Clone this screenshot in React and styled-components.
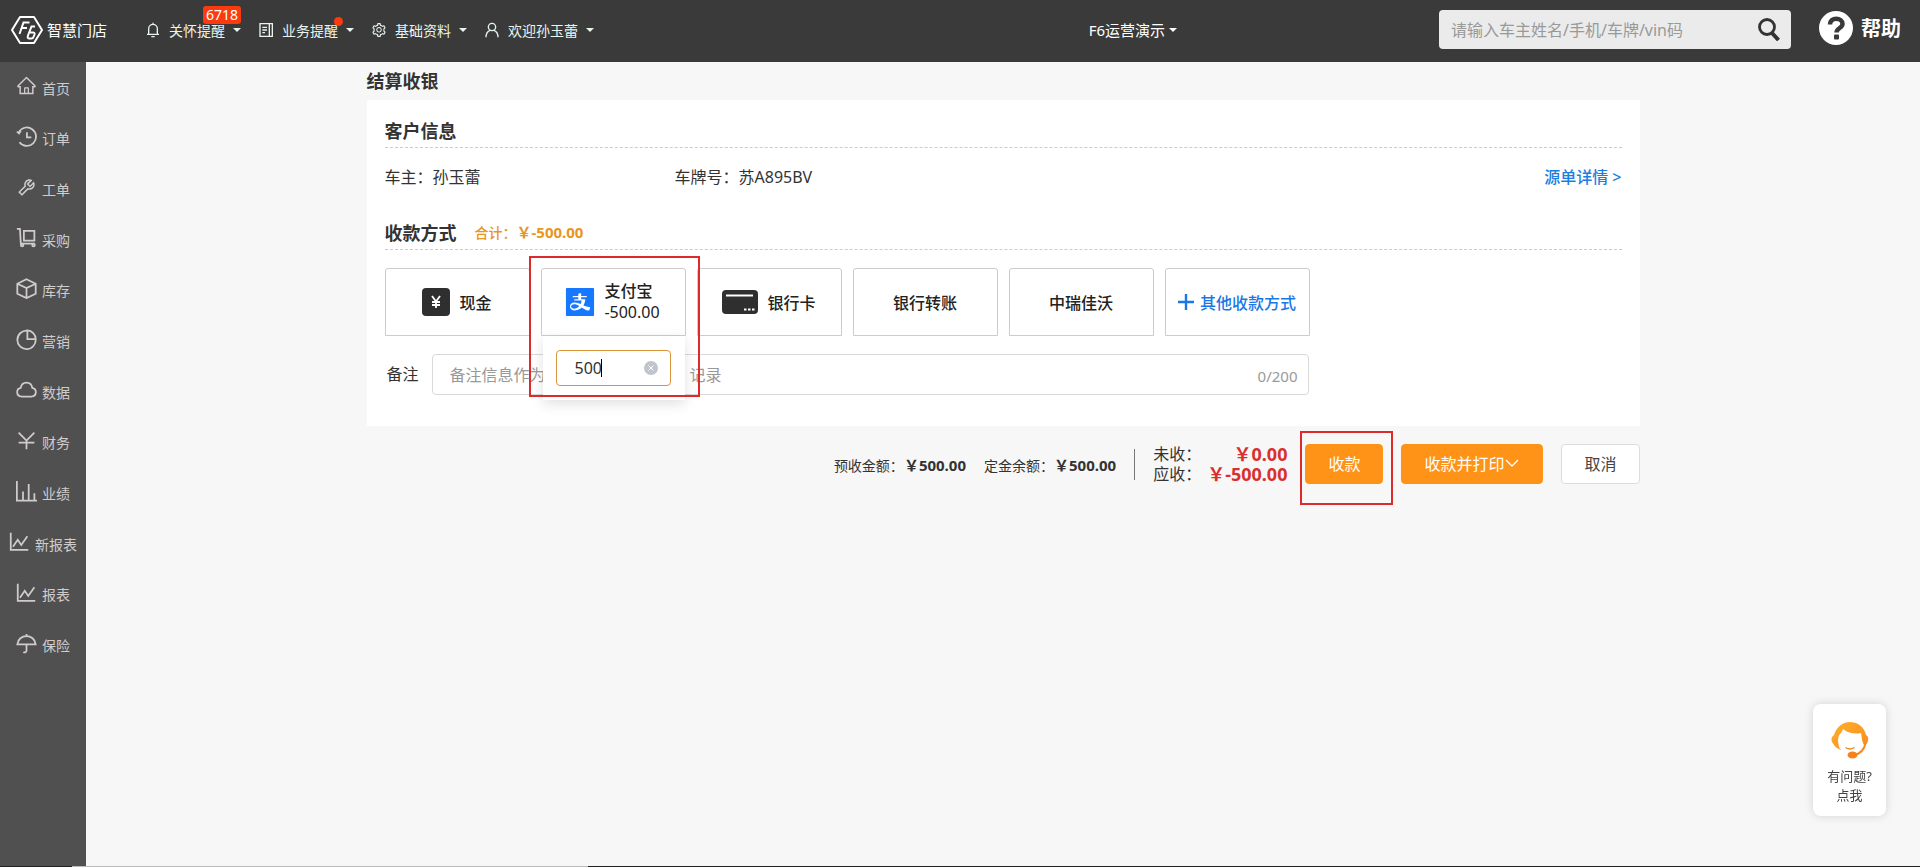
import React, { useState } from 'react'
import styled, { createGlobalStyle } from 'styled-components'
import { AiOutlineHome, AiOutlineSetting, AiOutlineTool, AiFillAlipaySquare } from 'react-icons/ai'

const line = {
  viewBox: '0 0 24 24',
  fill: 'none',
  stroke: 'currentColor',
  strokeWidth: 2,
}

const OrderIcon = () => (
  <svg {...line}>
    <path d="M3 7.500A10.500 10.500 0 1 1 4 18.500M12.500 7v6h5" />
    <path d="M1 6.500l2.500 2 2-3" />
  </svg>
)

const CartIcon = () => (
  <svg {...line}>
    <path d="M1 2h3.500l1 17H21M9 4.500h12v11H9z" />
    <circle cx="7" cy="20.500" r="1.500" />
    <circle cx="20" cy="20.500" r="1.500" />
  </svg>
)

const BoxIcon = () => (
  <svg {...line}>
    <path d="M12 1.500l10.500 5v11.500l-10.500 5-10.500-5v-11.500zM1.500 6.500l10.500 5 10.500-5M12 11.500v11" />
  </svg>
)

const PieIcon = () => (
  <svg {...line}>
    <path d="M13 2a10.500 10.500 0 1 0 9.500 9.500M13 1.500v10h9.500A10 10 0 0 0 13 1.500z" />
  </svg>
)

const CloudIcon = () => (
  <svg {...line}>
    <path d="M6 20a5 5 0 0 1-.6-9.900C6 6 9 4 12 4s6 2 6.600 6.100A5 5 0 0 1 18 20z" />
  </svg>
)

const YuanIcon = () => (
  <svg {...line}>
    <path d="M3 3l9 9 9-9M12 12v10M3 14.500h18" />
  </svg>
)

const BarsIcon = () => (
  <svg {...line}>
    <path d="M1 0v22.500H24M8 22V12M14.500 22V3.500M21 22v-8" />
  </svg>
)

const TrendIcon = () => (
  <svg {...line}>
    <path d="M2 2v19.500h20M4.500 18l5.500-8 4 6L21 6" />
  </svg>
)

const UmbrellaIcon = () => (
  <svg {...line}>
    <path d="M12 1v2.500M1.500 13C2 7 7 3.500 12 3.500S22 7 22.500 13zM12 13v7.500a2 2 0 0 1-3.500 1" />
  </svg>
)

const BellIcon = () => (
  <svg {...line}>
    <path d="M5.500 18V10a6.500 6.500 0 0 1 13 0v8M3 18.500h18M12 4V1M9.500 22h5" />
  </svg>
)

const DocIcon = () => (
  <svg {...line}>
    <path d="M3 2.500h14v19H3zM17 2.500h4.500v19H17M6.500 8h7M6.500 12h7M6.500 16h4" />
  </svg>
)

const UserIcon = () => (
  <svg {...line}>
    <circle cx="12" cy="7.500" r="5.500" />
    <path d="M3 23c0-6 3-9.500 6.500-10.500M21 23c0-6-3-9.500-6.500-10.500" />
  </svg>
)

const BrandIcon = () => (
  <svg width="32" height="30" viewBox="0 0 32 30" fill="none" stroke="#fff">
    <path d="M9 2h14l8 13-8 13H9L1 15z" strokeWidth="2" strokeLinejoin="round" />
    <path d="M8.500 19l4-11.500h6M11 13h5" strokeWidth="2" />
    <path d="M24 11.500h-3.500l-3.500 9q-1 3 1 3h2.500q1.500 0 2-1.500l1-2.500q.5-2-1.500-2h-3" strokeWidth="2" />
  </svg>
)

const SearchIcon = () => (
  <svg width="22" height="23" viewBox="0 0 22 23" fill="none" stroke="#333">
    <circle cx="9" cy="9" r="7.500" strokeWidth="2.800" />
    <path d="M14 15l6.500 7" strokeWidth="4" />
  </svg>
)

const HelpIcon = () => (
  <svg width="34" height="34" viewBox="0 0 34 34" fill="none">
    <circle cx="17" cy="17" r="17" fill="#fff" />
    <path d="M11 13.500c0-8 12.500-7.500 12.500-.5 0 4-6 4-6 8.500" stroke="#3a3a3a" strokeWidth="4.500" />
    <rect x="15" y="23.500" width="5" height="5" rx="1" fill="#3a3a3a" />
  </svg>
)

const CashIcon = () => (
  <svg width="28" height="28" viewBox="0 0 28 28" fill="none">
    <rect width="28" height="28" rx="4" fill="#2f2f2f" />
    <path d="M10 8l4 5.500L18 8M14 13.500V20M10 14h8M10 17h8" stroke="#fff" strokeWidth="1.800" />
  </svg>
)

const CardIcon = () => (
  <svg width="36" height="24" viewBox="0 0 36 24">
    <rect width="36" height="24" rx="4" fill="#2f2f2f" />
    <path d="M4 5.500h27" stroke="#fff" strokeWidth="2" />
    <path d="M22 19.500h2.500M26 19.500h2.500M30 19.500h2.500" stroke="#fff" strokeWidth="2" />
  </svg>
)

const PlusIcon = () => (
  <svg width="16" height="16" viewBox="0 0 16 16" stroke="currentColor" strokeWidth="2.400">
    <path d="M8 0v16M0 8h16" />
  </svg>
)

const ClearIcon = () => (
  <svg width="14" height="14" viewBox="0 0 14 14">
    <circle cx="7" cy="7" r="7" fill="#c0c4cc" />
    <path d="M4.500 4.500l5 5M9.500 4.500l-5 5" stroke="#fff" />
  </svg>
)

const ServiceIcon = () => (
  <svg width="38" height="38" viewBox="0 0 38 38" fill="none">
    <defs>
      <linearGradient id="hair" x1="0" y1="0" x2="1" y2="1">
        <stop offset="0" stopColor="#ffb02e" />
        <stop offset="1" stopColor="#f78a1d" />
      </linearGradient>
    </defs>
    <path
      d="M3 14C6 5 12 1 19 1s14 4 16 13c2 1 2.500 3 2 5.500-.4 2.500-1.500 4-3.500 4.500-2-1-2.500-6-3.500-12-5 1-12 1-18-4-1 4-4 5-4.500 8-1 4 0 8 1 11l2 2C7 28 3 25 2.500 23 0 21-.5 16 3 14z"
      fill="url(#hair)"
    />
    <path d="M34.500 22c-1 6-5 11-12 12" stroke="#f78a1d" strokeWidth="2" />
    <ellipse cx="21.500" cy="34" rx="5" ry="3.500" fill="#f5821f" />
    <path d="M14.500 26.500q4.500 3 9 0" stroke="#f78a1d" strokeWidth="1.500" />
  </svg>
)

const menus = [
  { icon: <BellIcon />, text: '关怀提醒', badge: '6718' },
  { icon: <DocIcon />, text: '业务提醒', dot: true },
  { icon: <AiOutlineSetting />, text: '基础资料' },
  { icon: <UserIcon />, text: '欢迎孙玉蕾' },
]

const sideItems = [
  { icon: <AiOutlineHome />, text: '首页' },
  { icon: <OrderIcon />, text: '订单' },
  { icon: <AiOutlineTool />, text: '工单' },
  { icon: <CartIcon />, text: '采购' },
  { icon: <BoxIcon />, text: '库存' },
  { icon: <PieIcon />, text: '营销' },
  { icon: <CloudIcon />, text: '数据' },
  { icon: <YuanIcon />, text: '财务' },
  { icon: <BarsIcon />, text: '业绩' },
  { icon: <TrendIcon />, text: '新报表' },
  { icon: <TrendIcon />, text: '报表' },
  { icon: <UmbrellaIcon />, text: '保险' },
]

function TopBar() {
  return (
    <Header>
      <Brand href="#">
        <BrandIcon />
        智慧门店
      </Brand>
      <Menus>
        {menus.map(({ icon, text, badge, dot }) => (
          <MenuButton key={text}>
            {icon}
            <MenuText>
              {text}
              {badge && <Badge>{badge}</Badge>}
              {dot && <Dot />}
            </MenuText>
            <Caret />
          </MenuButton>
        ))}
      </Menus>
      <StoreButton>
        F6运营演示
        <Caret />
      </StoreButton>
      <Search>
        <input aria-label="搜索" placeholder="请输入车主姓名/手机/车牌/vin码" />
        <button aria-label="查询">
          <SearchIcon />
        </button>
      </Search>
      <Help href="#">
        <HelpIcon />
        帮助
      </Help>
    </Header>
  )
}

function SideBar() {
  return (
    <Side>
      <SideList>
        {sideItems.map(({ icon, text }) => (
          <li key={text}>
            <SideLink href="#">
              {icon}
              <span>{text}</span>
            </SideLink>
          </li>
        ))}
      </SideList>
    </Side>
  )
}

function App() {
  const [amount, setAmount] = useState('500')
  const [remark, setRemark] = useState('')

  return (
    <>
      <GlobalStyle />
      <Page>
        <TopBar />
        <Body>
          <SideBar />
          <Main>
            <Content>
              <PageTitle>结算收银</PageTitle>
              <Panel>
                <SectionHead>
                  <h2>客户信息</h2>
                </SectionHead>
                <InfoRow>
                  <span>车主：孙玉蕾</span>
                  <span>车牌号：苏A895BV</span>
                  <a href="#">源单详情 &gt;</a>
                </InfoRow>
                <SectionHead>
                  <h2>收款方式</h2>
                  <Total>
                    合计：<b>￥-500.00</b>
                  </Total>
                </SectionHead>
                <Methods>
                  <Method>
                    <CashIcon />
                    现金
                  </Method>
                  <MethodCell>
                    <Method>
                      <AlipayIcon />
                      <MethodText>
                        支付宝
                        <small>-500.00</small>
                      </MethodText>
                    </Method>
                    <Popover>
                      <AmountBox>
                        <input
                          aria-label="支付宝金额"
                          value={amount}
                          onChange={(e) => setAmount(e.target.value)}
                        />
                        <Cursor />
                        <button aria-label="清空" onClick={() => setAmount('')}>
                          <ClearIcon />
                        </button>
                      </AmountBox>
                    </Popover>
                    <Highlight $top={-12} $right={-14} $bottom={-61} $left={-12} />
                  </MethodCell>
                  <Method>
                    <CardIcon />
                    银行卡
                  </Method>
                  <Method>银行转账</Method>
                  <Method>中瑞佳沃</Method>
                  <Method $link>
                    <PlusIcon />
                    其他收款方式
                  </Method>
                </Methods>
                <Remark>
                  <label htmlFor="remark">备注</label>
                  <RemarkBox>
                    <input
                      id="remark"
                      maxLength={200}
                      placeholder="备注信息作为收款凭证的一部分，记录"
                      value={remark}
                      onChange={(e) => setRemark(e.target.value)}
                    />
                    <span>{remark.length}/200</span>
                  </RemarkBox>
                </Remark>
              </Panel>
              <Actions>
                <Balance>
                  预收金额：<b>￥500.00</b>
                </Balance>
                <Balance>
                  定金余额：<b>￥500.00</b>
                </Balance>
                <Divider />
                <Due>
                  <dt>未收：</dt>
                  <dd>￥0.00</dd>
                  <dt>应收：</dt>
                  <dd>￥-500.00</dd>
                </Due>
                <ButtonCell>
                  <Button $primary>收款</Button>
                  <Highlight $top={-13} $right={-10} $bottom={-21} $left={-5} />
                </ButtonCell>
                <Button $primary>
                  收款并打印
                  <svg width="16" height="8" viewBox="0 0 16 8" fill="none" stroke="#fff" strokeWidth="1.300">
                    <path d="M2 1l6 6 6-6" />
                  </svg>
                </Button>
                <Button>取消</Button>
              </Actions>
            </Content>
          </Main>
        </Body>
        <BottomEdge />
      </Page>
      <Service href="#">
        <ServiceIcon />
        <span>有问题?</span>
        <span>点我</span>
      </Service>
    </>
  )
}

const GlobalStyle = createGlobalStyle`
*{
    box-sizing: border-box;
}
body{
    margin: 0;
    background: #f7f7f7;
    color: #333;
}
body, button, input{
    font-family: "Noto Sans", "Noto Sans CJK SC", sans-serif;
}
button{
    padding: 0;
    border: 0;
    background: none;
    color: inherit;
    cursor: pointer;
}
a{
    text-decoration: none;
}
svg{
    flex: none;
    display: block;
}
`

const Page = styled.div`
display: flex;
flex-direction: column;
min-height: 100vh;
`

const Header = styled.header`
display: flex;
align-items: center;
height: 62px;
padding: 0 19px 3px 11px;
background: #3a3a3a;
color: #fff;
font-size: 14px;
`

const Brand = styled.a`
display: flex;
align-items: center;
gap: 4px;
color: #fff;
font-size: 15px;
`

const Menus = styled.nav`
display: flex;
flex: 1;
gap: 17px;
margin-left: 38px;
`

const MenuButton = styled.button`
display: flex;
align-items: center;
gap: 8px;
font-size: 14px;
color: #e8f5ec;
> svg{
    width: 16px;
    height: 16px;
}
`

const MenuText = styled.span`
position: relative;
`

const Badge = styled.span`
position: absolute;
left: 34px;
bottom: 16px;
padding: 0 3px;
border-radius: 3px;
background: #fb3a0e;
color: #fff;
line-height: 18px;
`

const Dot = styled.span`
position: absolute;
top: -3px;
right: -5px;
width: 9px;
height: 9px;
border-radius: 50%;
background: #fb3a0e;
`

const Caret = styled.i`
border: 4px solid transparent;
border-top-color: currentColor;
border-bottom: 0;
`

const StoreButton = styled.button`
display: flex;
align-items: center;
gap: 4px;
margin-right: 262px;
font-size: 15px;
`

const Search = styled.div`
display: flex;
align-items: center;
width: 352px;
height: 39px;
padding: 0 11px 0 12px;
border-radius: 4px;
background: #ebebeb;
input{
    flex: 1;
    min-width: 0;
    border: 0;
    padding: 0;
    outline: 0;
    background: none;
    font-size: 16px;
}
input::placeholder{
    color: #999;
}
`

const Help = styled.a`
display: flex;
align-items: center;
gap: 8px;
margin: -4px 0 0 28px;
color: #fff;
font-size: 20px;
font-weight: bold;
`

const Body = styled.div`
display: flex;
flex: 1;
`

const Side = styled.nav`
width: 86px;
background: #505050;
`

const SideList = styled.ul`
display: grid;
grid-template-rows: repeat(12, 1fr);
height: 608px;
margin: 0;
padding: 0;
list-style: none;
`

const SideLink = styled.a`
display: flex;
align-items: center;
justify-content: center;
gap: 5px;
height: 100%;
padding-bottom: 3px;
color: #d0cccc;
font-size: 14px;
svg{
    width: 21px;
    height: 21px;
}
span{
    padding-top: 4px;
}
`

const Main = styled.main`
flex: 1;
padding: 0 20px;
`

const Content = styled.div`
max-width: 1273px;
margin: 0 auto;
`

const PageTitle = styled.h1`
margin: 0;
font-size: 18px;
line-height: 38px;
`

const Panel = styled.section`
padding: 12px 18px 31px;
background: #fff;
`

const SectionHead = styled.div`
display: flex;
align-items: center;
gap: 18px;
height: 36px;
border-bottom: 1px dashed #ccc;
h2{
    margin: 0;
    font-size: 18px;
}
`

const Total = styled.span`
color: #e8961e;
font-size: 14px;
font-weight: 500;
b{
    font-size: 15px;
}
`

const InfoRow = styled.div`
display: flex;
height: 66px;
padding-top: 17px;
font-size: 16px;
line-height: 24px;
span{
    width: 290px;
}
a{
    margin-left: auto;
    color: #1a7fe0;
    font-weight: 500;
}
`

const Methods = styled.div`
display: flex;
gap: 11px;
margin-top: 18px;
`

const MethodCell = styled.div`
position: relative;
`

const Method = styled.button`
display: flex;
align-items: center;
justify-content: center;
gap: ${(p) => (p.$link ? '6px' : '9px')};
width: 145px;
height: 68px;
padding-bottom: 1px;
border: 1px solid #ccc;
border-radius: 3px 3px 0 0;
background: #fff;
color: ${(p) => (p.$link ? '#1a78e6' : '#222')};
font-size: 16px;
font-weight: 500;
`

const AlipayIcon = styled(AiFillAlipaySquare)`
width: 36px;
height: 36px;
margin: 0 -3px 0 -4px;
color: #1677ff;
`

const MethodText = styled.span`
text-align: left;
line-height: 21px;
small{
    display: block;
    font-size: 16px;
    font-weight: normal;
}
`

const Popover = styled.div`
position: absolute;
z-index: 1;
top: 68px;
left: 2px;
right: 1px;
padding: 14px 14px 14px 13px;
background: #fff;
box-shadow: 0 4px 12px rgba(0, 0, 0, 0.12);
`

const AmountBox = styled.div`
position: relative;
display: flex;
align-items: center;
height: 36px;
padding: 0 12px 0 18px;
border: 1px solid #d9963a;
border-radius: 4px;
input{
    flex: 1;
    min-width: 0;
    padding: 0;
    border: 0;
    outline: 0;
    font-size: 16px;
    color: #333;
}
`

const Cursor = styled.i`
position: absolute;
left: 44px;
top: 8px;
width: 1px;
height: 18px;
background: #000;
`

// red frame round a control
const Highlight = styled.span`
position: absolute;
z-index: 2;
top: ${(p) => p.$top}px;
right: ${(p) => p.$right}px;
bottom: ${(p) => p.$bottom}px;
left: ${(p) => p.$left}px;
border: 2px solid #dd2a2a;
pointer-events: none;
`

const Remark = styled.div`
display: flex;
align-items: center;
gap: 13px;
max-width: 924px;
margin-top: 18px;
padding-left: 2px;
font-size: 16px;
label{
    padding-bottom: 3px;
}
`

const RemarkBox = styled.div`
display: flex;
flex: 1;
align-items: center;
height: 41px;
padding: 0 10px 0 17px;
border: 1px solid #d9d9d9;
border-radius: 4px;
color: #999;
font-size: 15px;
input{
    width: 300px;
    padding: 0;
    border: 0;
    outline: 0;
    font-size: 16px;
}
input::placeholder{
    color: #999;
}
span{
    margin-left: auto;
    padding-top: 2px;
}
`

const Actions = styled.div`
display: flex;
align-items: center;
justify-content: flex-end;
gap: 18px;
margin-top: 18px;
`

const Balance = styled.span`
font-size: 14px;
b{
    font-size: 15px;
}
`

const Divider = styled.i`
width: 1px;
height: 31px;
background: #777;
`

const Due = styled.dl`
display: grid;
grid-template-columns: auto auto;
column-gap: 6px;
margin: 0;
font-size: 16px;
line-height: 20px;
dd{
    margin: 0;
    color: #d9302f;
    font-size: 18px;
    font-weight: bold;
    text-align: right;
}
`

const ButtonCell = styled.div`
position: relative;
`

const Button = styled.button`
display: flex;
align-items: center;
height: 40px;
padding: 0 22px 2px;
border: 1px solid ${(p) => (p.$primary ? '#ff9317' : '#ddd')};
border-radius: 4px;
background: ${(p) => (p.$primary ? '#ff9317' : '#fff')};
color: ${(p) => (p.$primary ? '#fff' : '#444')};
font-size: 16px;
`

const BottomEdge = styled.div`
height: 1px;
background: linear-gradient(to right, #222 72px, #bbb 72px, #bbb 588px, #222 588px);
`

const Service = styled.a`
position: fixed;
right: 34px;
bottom: 51px;
display: flex;
flex-direction: column;
align-items: center;
width: 73px;
height: 112px;
padding-top: 17px;
border-radius: 8px;
background: #fff;
box-shadow: 0 0 10px rgba(0, 0, 0, 0.15);
color: #444;
font-size: 13px;
line-height: 19px;
svg{
    margin-bottom: 8px;
}
`

export default App
